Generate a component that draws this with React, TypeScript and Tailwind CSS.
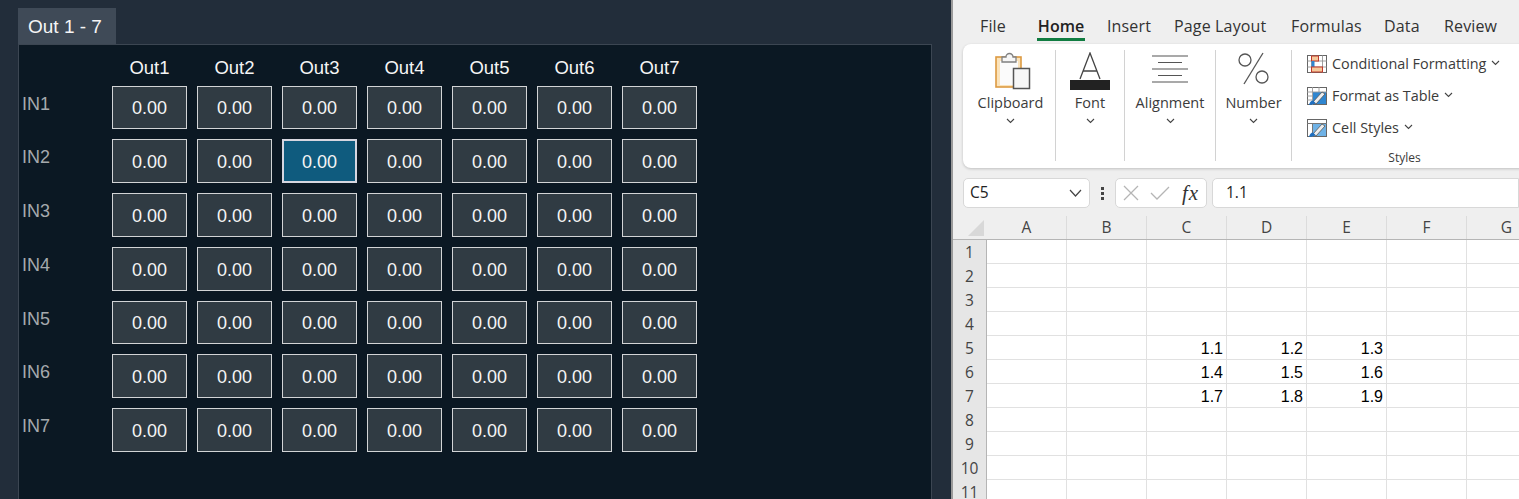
import React from "react";

const outs = ["Out1", "Out2", "Out3", "Out4", "Out5", "Out6", "Out7"];
const ins = ["IN1", "IN2", "IN3", "IN4", "IN5", "IN6", "IN7"];
const colNames = ["A", "B", "C", "D", "E", "F", "G"];
const sheet: Record<number, string[]> = {
  5: ["1.1", "1.2", "1.3"],
  6: ["1.4", "1.5", "1.6"],
  7: ["1.7", "1.8", "1.9"],
};

function Chev() {
  return (
    <svg width="9" height="6" viewBox="0 0 9 6" fill="none" stroke="#444" strokeWidth="1.1">
      <path d="M1 1 L4.5 4.5 L8 1" />
    </svg>
  );
}

function Clipboard() {
  return (
    <svg className="ml-[5px]" width="36" height="40" viewBox="0 0 36 40" fill="none">
      <rect x="1" y="7" width="25" height="30" fill="#fbe3bb" stroke="#dd9a42" strokeWidth="1.6" />
      <rect x="5" y="11" width="18" height="24" fill="#fbfbfb" />
      <path d="M7 12 V7 H11 A3.5 3.5 0 0 1 18 7 H21 V12 Z" fill="#f6f6f6" stroke="#808080" strokeWidth="1.3" />
      <rect x="18.5" y="18.5" width="16" height="20" fill="#f7f7f7" stroke="#555" strokeWidth="1.5" />
    </svg>
  );
}

function FontIcon() {
  return (
    <svg width="40" height="38" viewBox="0 0 40 38" fill="none">
      <path d="M10 27 L20 1 L30 27 M13.5 19 H26.5" stroke="#444" strokeWidth="1.3" />
      <rect x="0" y="28" width="40" height="10" fill="#222" />
    </svg>
  );
}

function AlignIcon() {
  return (
    <svg className="mb-[7px]" width="36" height="28" viewBox="0 0 36 28" stroke="#555" strokeWidth="1.2">
      <path d="M0 1 H36 M6 7.5 H30 M0 14 H36 M6 20.5 H30 M0 27 H36" />
    </svg>
  );
}

function PercentIcon() {
  return (
    <svg className="mb-[5px]" width="33" height="33" viewBox="0 0 33 33" fill="none" stroke="#555" strokeWidth="1.3">
      <circle cx="8" cy="8" r="6" />
      <circle cx="25" cy="25" r="6" />
      <path d="M26 1 L7 32" />
    </svg>
  );
}

function CondIcon() {
  return (
    <svg width="20" height="18" viewBox="0 0 20 18" fill="none">
      <rect x="0.5" y="0.5" width="19" height="17" fill="#fff" stroke="#666" />
      <path d="M0 6 H20 M0 12 H20 M4.5 0 V18 M15.5 0 V18" stroke="#888" strokeWidth="0.8" />
      <rect x="4.5" y="1" width="7" height="5" fill="#f5c99b" stroke="#c0392b" />
      <rect x="4.5" y="6" width="3" height="6" fill="#2f86d0" />
      <rect x="4.5" y="12" width="11" height="5" fill="#f5c99b" stroke="#c0392b" />
    </svg>
  );
}

function TableIcon({ filled }: { filled?: boolean }) {
  return (
    <svg width="20" height="18" viewBox="0 0 20 18" fill="none">
      <rect x="0.5" y="0.5" width="19" height="17" fill="#fff" stroke="#666" />
      <rect x="6" y="5" width="13" height="12" fill={filled ? "#6fb2e6" : "#2f86d0"} />
      {filled ? (
        <path d="M0 4.5 H20 M5.5 4 V18" stroke="#777" strokeWidth="1" />
      ) : (
        <path d="M0 5 H20 M0 9 H6 M0 13 H6 M5.5 0 V18 M12 0 V5" stroke="#999" strokeWidth="0.9" />
      )}
      <path d="M6 15 L15 5 L18 7 L9 17 Z" fill="#ededed" stroke="#555" strokeWidth="0.8" />
      <path d="M2 18 Q3 13.5 6 13.5 L8.5 16 Q6 18 2 18 Z" fill="#1f6fc0" />
    </svg>
  );
}

function Group({ label, icon, cls }: { label: string; icon: React.ReactNode; cls: string }) {
  return (
    <div className={`flex flex-col items-center border-r border-[#d2d2d2] h-[111px] ${cls}`}>
      <div className="h-[40px] flex items-end justify-center">{icon}</div>
      <div className="mt-[3px] text-[14.5px] leading-[20px] text-[#3b3b3b]">{label}</div>
      <div className="mt-[4px] h-[8px] flex items-center"><Chev /></div>
    </div>
  );
}

function StyleRow({ icon, label }: { icon: React.ReactNode; label: string }) {
  return (
    <div className="flex items-center h-[32px] text-[14.4px] text-[#3b3b3b]">
      <span className="w-[25px]">{icon}</span>
      <span>{label}</span>
      <span className="ml-[5px] -mt-[2px]"><Chev /></span>
    </div>
  );
}

export default function App() {
  return (
    <div className="flex w-[1519px] h-[499px] overflow-hidden font-['Liberation_Sans',Arial,sans-serif]">
      {/* Left app */}
      <div className="w-[951px] h-full shrink-0 bg-[#222d3a] pl-[18px] pt-[8px]">
        <div className="w-[98px] h-[36px] bg-[#3f4a57] text-[#f5f5f5] text-[19px] pl-[10px] pt-[2px] flex items-center">Out 1 - 7</div>
        <div className="w-[914px] h-[460px] bg-[#0b1823] border-l border-t border-r border-[#3c4652]">
          <div className="flex pl-[93px] pt-[11px] h-[40.6px]">
            {outs.map((o) => (
              <div key={o} className="w-[75px] mr-[10px] text-center text-[18.5px] leading-[24px] text-[#f5f5f5]">{o}</div>
            ))}
          </div>
          <div className="flex flex-col gap-[10px]">
            {ins.map((r, ri) => (
              <div key={r} className="flex h-[43.75px]">
                <div className="w-[93px] pl-[3px] text-[18px] leading-[36px] text-[#a5a9ad]">{r}</div>
                {outs.map((o, ci) => {
                  const sel = ri === 1 && ci === 2;
                  return (
                    <div
                      key={o}
                      className={`w-[75px] mr-[10px] flex items-center justify-center pt-[3px] text-[18px] text-[#f5f5f5] ${
                        sel ? "bg-[#0f5b7e] border-2 border-[#d6d6e0]" : "bg-[#303b43] border border-[#d2d4d6]"
                      }`}
                    >
                      0.00
                    </div>
                  );
                })}
              </div>
            ))}
          </div>
        </div>
      </div>

      {/* Excel */}
      <div className="flex-1 min-w-0 h-full bg-[#efefef] border-l-2 border-[#9a9a9a] font-['Open_Sans','Noto_Sans',sans-serif] relative overflow-hidden">
        <div className="flex pl-[27px] pt-[16px] h-[44px] text-[16px] leading-[20px] tracking-[0.15px] text-[#333]">
          <span className="w-[57px]">File</span>
          <span className="relative font-semibold text-[#222] w-[48px] text-center tracking-normal">
            Home
            <span className="absolute left-0 right-0 top-[22px] h-[3px] bg-[#107c41]" />
          </span>
          <span className="ml-[22px] w-[67px]">Insert</span>
          <span className="w-[117px]">Page Layout</span>
          <span className="w-[93px]">Formulas</span>
          <span className="w-[60px]">Data</span>
          <span>Review</span>
        </div>
        <div className="ml-[10px] w-[600px] h-[124px] bg-white rounded-[8px] shadow-[0_1px_3px_rgba(0,0,0,0.2)] pt-[6px] flex">
          <Group label="Clipboard" icon={<Clipboard />} cls="w-[93px] pl-[3px]" />
          <Group label="Font" icon={<FontIcon />} cls="w-[69px]" />
          <Group label="Alignment" icon={<AlignIcon />} cls="w-[91px]" />
          <Group label="Number" icon={<PercentIcon />} cls="w-[76px]" />
          <div className="pl-[15px] -mt-[2px]">
            <StyleRow icon={<CondIcon />} label="Conditional Formatting" />
            <StyleRow icon={<TableIcon />} label="Format as Table" />
            <StyleRow icon={<TableIcon filled />} label="Cell Styles" />
            <div className="text-[12px] text-center text-[#3b3b3b] w-[195px] mt-[5px]">Styles</div>
          </div>
        </div>
        {/* Formula bar */}
        <div className="flex items-center h-[30px] mt-[10px] ml-[10px] text-[15.5px] text-[#222]">
          <div className="w-[127px] h-full bg-white border border-[#d8d8d8] rounded-[5px] flex items-center justify-between pl-[6px] pr-[7px]">
            <span>C5</span>
            <svg width="13" height="8" viewBox="0 0 13 8" fill="none" stroke="#444" strokeWidth="1.2"><path d="M1 1 L6.5 7 L12 1" /></svg>
          </div>
          <div className="w-[25px] flex flex-col items-center gap-[2px]">
            <span className="w-[3px] h-[3px] bg-[#444]" />
            <span className="w-[3px] h-[3px] bg-[#444]" />
            <span className="w-[3px] h-[3px] bg-[#444]" />
          </div>
          <div className="w-[92px] h-full bg-white border border-[#d8d8d8] rounded-[5px] flex items-center pl-[7px]">
            <svg width="16" height="16" viewBox="0 0 16 16" stroke="#b5b5b5" strokeWidth="1.3" fill="none"><path d="M1 1 L15 15 M15 1 L1 15" /></svg>
            <svg className="ml-[11px]" width="20" height="14" viewBox="0 0 20 14" stroke="#b5b5b5" strokeWidth="1.3" fill="none"><path d="M1 7 L7 13 L19 1" /></svg>
            <span className="ml-[12px] text-[21px] leading-[24px] italic tracking-[1px] font-['Liberation_Serif',serif] text-[#333]">fx</span>
          </div>
          <div className="flex-1 ml-[5px] h-full bg-white border border-[#d8d8d8] rounded-l-[5px] pl-[13px] flex items-center">1.1</div>
        </div>
        {/* Sheet */}
        <div className="mt-[8px]">
          <div className="flex h-[24px] border-b border-[#b5b5b5] bg-[#efefef]">
            <div className="w-[34px] shrink-0 relative">
              <svg className="absolute right-[3px] bottom-[3px]" width="16" height="16" viewBox="0 0 16 16"><path d="M16 0 V16 H0 Z" fill="#d8d8d8" /></svg>
            </div>
            {colNames.map((c) => (
              <div key={c} className="w-[80px] shrink-0 border-r border-[#dcdcdc] text-center text-[15.5px] leading-[22px] text-[#444]">{c}</div>
            ))}
          </div>
          {Array.from({ length: 11 }, (_, i) => i + 1).map((n) => (
            <div key={n} className="flex h-[24px]">
              <div className="w-[34px] shrink-0 bg-[#e6e6e6] border-r border-[#b5b5b5] text-center text-[15.5px] leading-[24px] text-[#444]">{n}</div>
              {colNames.map((c, ci) => (
                <div key={c} className="w-[80px] shrink-0 bg-white border-r border-b border-[#e1e1e1] pr-[3px] pt-[1px] text-right text-[16px] leading-[24px] text-black font-['Liberation_Sans',sans-serif]">
                  {sheet[n] && ci >= 2 && ci <= 4 ? sheet[n][ci - 2] : ""}
                </div>
              ))}
            </div>
          ))}
        </div>
      </div>
    </div>
  );
}
